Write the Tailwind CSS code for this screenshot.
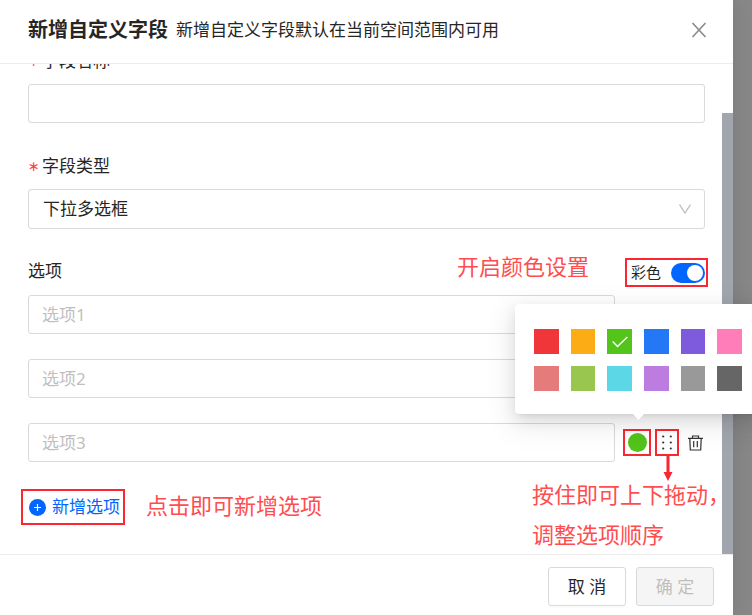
<!DOCTYPE html>
<html lang="zh-CN">
  <head>
    <meta charset="UTF-8" />
    <meta name="viewport" content="width=device-width, initial-scale=1.0" />
    <title>新增自定义字段</title>
    <script src="https://cdn.jsdelivr.net/npm/@tailwindcss/browser@4"></script>
  </head>
  <body
    class="bg-[#888888] font-['Noto_Sans','Noto_Sans_CJK_SC',sans-serif] text-[17px] text-[#262626]"
  >
    <div class="flex h-screen overflow-hidden pr-[19px]">
      <!-- Modal -->
      <div class="flex min-w-0 flex-1 flex-col bg-white shadow-[0_0_20px_rgba(0,0,0,0.12)]">
        <!-- Header -->
        <header
          class="relative z-10 flex h-16 shrink-0 items-center border-b border-[#ececec] bg-white pr-[26px] pb-1 pl-7"
        >
          <h1 class="text-[20px] font-bold">新增自定义字段</h1>
          <p class="ml-2">新增自定义字段默认在当前空间范围内可用</p>
          <button type="button" aria-label="关闭" class="ml-auto text-[#8c8c8c]">
            <svg class="size-4" viewBox="0 0 16 16" fill="none" stroke="currentColor" stroke-width="1.7">
              <path d="M1.5 1 14.5 15M14.5 1 1.5 15" />
            </svg>
          </button>
        </header>

        <!-- Body -->
        <div class="flex min-h-0 flex-1">
          <form class="-mt-4 min-w-0 flex-1 pr-[17px] pl-7">
            <label for="name" class="flex items-center leading-[26px]">
              <span class="w-3.5 font-['DejaVu_Sans'] text-sm text-[#f5484b]">∗</span>字段名称
            </label>
            <input id="name" type="text" class="mt-2.5 h-[39px] w-full rounded-[3px] border border-[#d9d9d9] px-[13px]" />

            <label for="type" class="mt-[30px] flex items-center leading-[26px]">
              <span class="w-3.5 font-['DejaVu_Sans'] text-sm text-[#f5484b]">∗</span>字段类型
            </label>
            <div class="relative mt-2.5">
              <select id="type" class="block h-10 w-full appearance-none rounded-[3px] border border-[#d9d9d9] bg-white px-3.5">
                <option>下拉多选框</option>
              </select>
              <svg
                class="pointer-events-none absolute top-3.5 right-3.5 size-3"
                viewBox="0 0 12 12"
                fill="none"
                stroke="#bfbfbf"
                stroke-width="1.3"
              >
                <path d="M0.5 1.5 6 10 11.5 1.5" />
              </svg>
            </div>

            <div class="mt-[29px] -mr-[3px] flex items-start">
              <h2 class="leading-[26px]">选项</h2>
              <p class="mr-9 ml-auto text-[22px] leading-4 text-[#ff4d4f]">开启颜色设置</p>
              <label class="flex h-[29px] items-center gap-2.5 border-2 border-[#fb2630] pr-px pl-1 text-[15px]">
                彩色
                <input
                  type="checkbox"
                  checked
                  class="h-5 w-[34px] appearance-none rounded-full bg-[#0066ff] p-0.5 before:ml-auto before:block before:size-4 before:rounded-full before:bg-white"
                />
              </label>
            </div>

            <div class="mt-2 flex flex-col gap-[25px]">
              <div class="flex pr-[90px]">
                <input type="text" aria-label="选项1" placeholder="选项1" class="h-[39px] min-w-0 flex-1 rounded-[3px] border border-[#d9d9d9] px-[13px] placeholder:text-[#bfbfbf]" />
              </div>
              <div class="flex pr-[90px]">
                <input type="text" aria-label="选项2" placeholder="选项2" class="h-[39px] min-w-0 flex-1 rounded-[3px] border border-[#d9d9d9] px-[13px] placeholder:text-[#bfbfbf]" />
              </div>
              <div class="flex items-center">
                <input type="text" aria-label="选项3" placeholder="选项3" class="h-[39px] min-w-0 flex-1 rounded-[3px] border border-[#d9d9d9] px-[13px] placeholder:text-[#bfbfbf]" />

                <div class="relative ml-2 flex h-[27px] w-7 items-center justify-center border-2 border-[#fb2630]">
                  <button type="button" aria-label="选择颜色" class="size-[19px] rounded-full bg-[#52c41a]"></button>
                  <!-- Colour popover -->
                  <div
                    class="absolute bottom-10 left-[-110px] z-20 w-[246px] rounded-sm bg-white px-[19px] pt-[25px] pb-[23px] shadow-[0_3px_6px_-4px_rgba(0,0,0,0.14),0_6px_16px_0_rgba(0,0,0,0.1),0_9px_28px_8px_rgba(0,0,0,0.06)]"
                  >
                    <div class="grid grid-cols-6 gap-3">
                      <button type="button" aria-label="红" class="h-[25px] bg-[#f03639]"></button>
                      <button type="button" aria-label="橙" class="h-[25px] bg-[#fcad15]"></button>
                      <button type="button" aria-label="绿" class="flex h-[25px] items-center justify-center bg-[#52c41a]">
                        <svg class="h-3 w-4" viewBox="0 0 16 12" fill="none" stroke="#ffffff" stroke-width="1.4">
                          <path d="M0.7 5.5 5.5 10.5 15.3 0.9" />
                        </svg>
                      </button>
                      <button type="button" aria-label="蓝" class="h-[25px] bg-[#2478f5]"></button>
                      <button type="button" aria-label="紫" class="h-[25px] bg-[#7e5bdd]"></button>
                      <button type="button" aria-label="粉" class="h-[25px] bg-[#ff7eb9]"></button>
                      <button type="button" aria-label="浅红" class="h-[25px] bg-[#e57b7b]"></button>
                      <button type="button" aria-label="浅绿" class="h-[25px] bg-[#98c64f]"></button>
                      <button type="button" aria-label="青" class="h-[25px] bg-[#5cd7e5]"></button>
                      <button type="button" aria-label="浅紫" class="h-[25px] bg-[#bd7cdf]"></button>
                      <button type="button" aria-label="灰" class="h-[25px] bg-[#999999]"></button>
                      <button type="button" aria-label="深灰" class="h-[25px] bg-[#666666]"></button>
                    </div>
                    <svg class="absolute top-full left-[118px] h-1.5 w-[11px]" viewBox="0 0 11 6" fill="#ffffff">
                      <path d="M0 0H11L5.5 6Z" />
                    </svg>
                  </div>
                </div>

                <div class="relative ml-1 flex h-[27px] w-6 items-center justify-center border-2 border-[#fb2630]">
                  <button type="button" aria-label="拖动排序">
                    <svg class="h-[15px] w-2.5" viewBox="0 0 10 15" fill="#333333">
                      <circle cx="1.2" cy="1.5" r="1.1" />
                      <circle cx="8.8" cy="1.5" r="1.1" />
                      <circle cx="1.2" cy="7.5" r="1.1" />
                      <circle cx="8.8" cy="7.5" r="1.1" />
                      <circle cx="1.2" cy="13.5" r="1.1" />
                      <circle cx="8.8" cy="13.5" r="1.1" />
                    </svg>
                  </button>
                  <svg class="absolute top-full left-1.5 h-7 w-2.5" viewBox="0 0 10 28" fill="#fb2630">
                    <path d="M3.5 0H6.5V18H9.5L5 27 0.5 18H3.5Z" />
                  </svg>
                  <p class="absolute top-[43px] right-[-53px] text-[22px] leading-10 whitespace-nowrap text-[#ff4d4f]">
                    按住即可上下拖动，<br />调整选项顺序
                  </p>
                </div>

                <button type="button" aria-label="删除" class="ml-[9px]">
                  <svg class="h-4 w-[17px]" viewBox="0 0 17 16" fill="none" stroke="#333333" stroke-width="1.2">
                    <path d="M0 3.3H15M4.5 3V1H10.5V3M1.8 3.5 2.3 15H12.7L13.2 3.5M5.7 6V12.2M9.3 6V12.2" />
                  </svg>
                </button>
              </div>
            </div>

            <div class="mt-[27px] -ml-[7px] flex items-center">
              <button type="button" class="flex h-9 items-center gap-1.5 border-2 border-[#fb2630] pr-[3px] pl-1.5 text-[#0066ff]">
                <svg class="size-[17px]" viewBox="0 0 17 17">
                  <circle cx="8.5" cy="8.5" r="8.5" fill="#0066ff" />
                  <path d="M8.5 5V12M5 8.5H12" stroke="#ffffff" stroke-width="1.2" />
                </svg>
                新增选项
              </button>
              <p class="ml-[21px] pb-1 text-[22px] leading-8 text-[#ff4d4f]">点击即可新增选项</p>
            </div>
          </form>

          <!-- Scrollbar -->
          <div class="mt-[49px] w-[11px] bg-[#a1a5ae]"></div>
        </div>

        <!-- Footer -->
        <footer class="flex h-[61px] shrink-0 items-start justify-end gap-2.5 border-t border-[#ececec] bg-white pt-3 pr-[19px]">
          <button type="button" class="h-[39px] w-[78px] rounded-[3px] border border-[#d9d9d9] bg-white shadow-[0_2px_0_rgba(0,0,0,0.015)]">取 消</button>
          <button type="button" disabled class="h-[39px] w-[78px] rounded-[3px] border border-[#d9d9d9] bg-[#f5f5f5] text-[#bfbfbf]">确 定</button>
        </footer>
      </div>
    </div>
  </body>
</html>
